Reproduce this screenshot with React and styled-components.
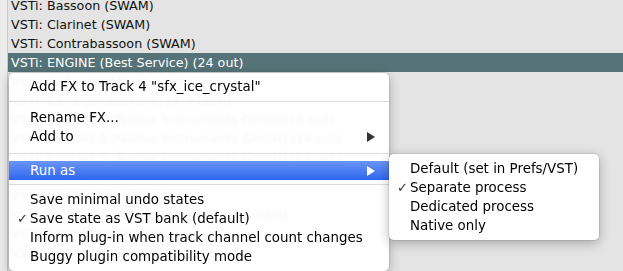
import React from "react";
import styled, { createGlobalStyle } from "styled-components";

const GlobalStyle = createGlobalStyle`
  html, body {
    margin: 0;
    padding: 0;
    width: 623px;
    height: 271px;
    overflow: hidden;
    background: #e3e4e3;
    font-family: "DejaVu Sans", "Liberation Sans", sans-serif;
  }
`;

const Window = styled.div`
  position: relative;
  display: flex;
  width: 623px;
  height: 271px;
  overflow: hidden;
`;

const Edge = styled.div`
  width: 8px;
  flex: none;
  background: #ededed;
  border-right: 1px solid #c9c9c9;
  box-sizing: border-box;
`;

const List = styled.div`
  flex: 1;
  display: flex;
  flex-direction: column;
  margin-top: -4px;
  background: #e3e4e3;
`;

const Row = styled.div`
  height: 19px;
  line-height: 19px;
  padding-left: 3px;
  font-size: 12.7px;
  color: ${(p) => (p.$selected ? "#ffffff" : "#111")};
  background: ${(p) => (p.$selected ? "#557378" : "transparent")};
  white-space: nowrap;
`;

const Menu = styled.div`
  position: absolute;
  left: 9px;
  top: 73px;
  width: 380px;
  padding: 4px 0 5px;
  background: rgba(255, 255, 255, 0.97);
  backdrop-filter: blur(1px);
  border-radius: 5px;
  box-shadow: 0 3px 12px rgba(0, 0, 0, 0.28), 0 0 0 1px rgba(0, 0, 0, 0.08);
  font-size: 13.4px;
  color: #000;
`;

const SubMenu = styled(Menu)`
  left: 389px;
  top: 154px;
  width: 210px;
  padding: 5px 0 5px;
`;

const Item = styled.div`
  position: relative;
  display: flex;
  align-items: center;
  height: 19px;
  padding-left: 21px;
  padding-right: 14px;
  white-space: nowrap;
  color: ${(p) => (p.$active ? "#fff" : "#000")};
  background: ${(p) =>
    p.$active ? "linear-gradient(#6a95f6, #2f66ee)" : "transparent"};
`;

const Check = styled.span`
  position: absolute;
  left: 8px;
  font-size: 13px;
  color: #333;
`;

const Label = styled.span`
  flex: 1;
`;

const Arrow = styled.svg`
  width: 8px;
  height: 10px;
  fill: ${(p) => (p.$active ? "#fff" : "#333")};
`;

const Separator = styled.div`
  height: 1px;
  margin: ${(p) => p.$top}px 0 ${(p) => p.$bottom}px;
  background: #dcdcdc;
`;

const rows = [
  "VSTi: Bassoon (SWAM)",
  "VSTi: Clarinet (SWAM)",
  "VSTi: Contrabassoon (SWAM)",
  "VSTi: ENGINE (Best Service) (24 out)",
  "VSTi: Flute (SWAM) (2->6ch)",
  "VSTi: Cave (Embertone) (2->10ch)",
  "VSTi: Kontakt 5 (Native Instruments GmbH) (8 out)",
  "VSTi: Kontakt 5 (Native Instruments GmbH) (16 out)",
  "VSTi: Kontakt 5 (Native Instruments GmbH) (64 out)",
  "VSTi: Oboe (SWAM)",
  "VSTi: Piano One (Sound Magic)",
  "VSTi: Reaktor 5 (Native Instruments GmbH)",
  "VSTi: Saxophone (SWAM)",
  "VSTi: Spitfire (Spitfire Audio)",
];

const TriangleRight = ({ active }) => (
  <Arrow viewBox="0 0 8 10" $active={active}>
    <path d="M0 0 L8 5 L0 10 Z" />
  </Arrow>
);

export default function App() {
  return (
    <Window>
      <GlobalStyle />
      <Edge />
      <List>
        {rows.map((r, i) => (
          <Row key={r} $selected={i === 3}>
            {r}
          </Row>
        ))}
      </List>

      <Menu>
        <Item>
          <Label>Add FX to Track 4 "sfx_ice_crystal"</Label>
        </Item>
        <Separator $top={5} $bottom={6} />
        <Item>
          <Label>Rename FX...</Label>
        </Item>
        <Item>
          <Label>Add to</Label>
          <TriangleRight />
        </Item>
        <Separator $top={7} $bottom={7} />
        <Item $active>
          <Label>Run as</Label>
          <TriangleRight active />
        </Item>
        <Separator $top={4} $bottom={5} />
        <Item>
          <Label>Save minimal undo states</Label>
        </Item>
        <Item>
          <Check>✓</Check>
          <Label>Save state as VST bank (default)</Label>
        </Item>
        <Item>
          <Label>Inform plug-in when track channel count changes</Label>
        </Item>
        <Item>
          <Label>Buggy plugin compatibility mode</Label>
        </Item>
      </Menu>

      <SubMenu>
        <Item>
          <Label>Default (set in Prefs/VST)</Label>
        </Item>
        <Item>
          <Check>✓</Check>
          <Label>Separate process</Label>
        </Item>
        <Item>
          <Label>Dedicated process</Label>
        </Item>
        <Item>
          <Label>Native only</Label>
        </Item>
      </SubMenu>
    </Window>
  );
}
